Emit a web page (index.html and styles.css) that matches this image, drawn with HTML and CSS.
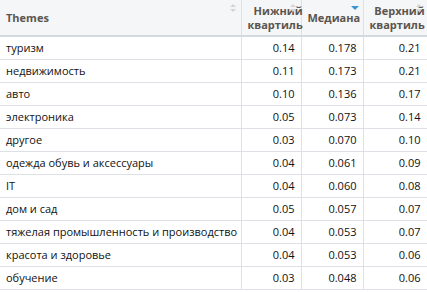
FILE: index.html
```html
<!DOCTYPE html>
<html>
<head>
<meta charset="utf-8">
<link rel="stylesheet" href="styles.css">
</head>
<body>
<table class="tbl">
  <colgroup>
    <col class="c-theme"><col class="c-num1"><col class="c-num2"><col class="c-num3">
  </colgroup>
  <thead>
    <tr>
      <th class="h-left"><span class="htext">Themes</span><span class="sort"></span></th>
      <th class="h-right"><span class="htext">Нижний квартиль</span><span class="sort"></span></th>
      <th class="h-right"><span class="htext">Медиана</span><span class="sort desc"></span></th>
      <th class="h-right"><span class="htext">Верхний квартиль</span><span class="sort"></span></th>
    </tr>
  </thead>
  <tbody>
    <tr><td>туризм</td><td class="n">0.14</td><td class="n">0.178</td><td class="n">0.21</td></tr>
    <tr><td>недвижимость</td><td class="n">0.11</td><td class="n">0.173</td><td class="n">0.21</td></tr>
    <tr><td>авто</td><td class="n">0.10</td><td class="n">0.136</td><td class="n">0.17</td></tr>
    <tr><td>электроника</td><td class="n">0.05</td><td class="n">0.073</td><td class="n">0.14</td></tr>
    <tr><td>другое</td><td class="n">0.03</td><td class="n">0.070</td><td class="n">0.10</td></tr>
    <tr><td>одежда обувь и аксессуары</td><td class="n">0.04</td><td class="n">0.061</td><td class="n">0.09</td></tr>
    <tr><td>IT</td><td class="n">0.04</td><td class="n">0.060</td><td class="n">0.08</td></tr>
    <tr><td>дом и сад</td><td class="n">0.05</td><td class="n">0.057</td><td class="n">0.07</td></tr>
    <tr><td>тяжелая промышленность и производство</td><td class="n">0.04</td><td class="n">0.053</td><td class="n">0.07</td></tr>
    <tr><td>красота и здоровье</td><td class="n">0.04</td><td class="n">0.053</td><td class="n">0.06</td></tr>
    <tr><td>обучение</td><td class="n">0.03</td><td class="n">0.048</td><td class="n">0.06</td></tr>
  </tbody>
</table>
</body>
</html>
```

FILE: styles.css
```css
html, body {
  margin: 0;
  padding: 0;
  background: #ffffff;
}
body {
  font-family: "Open Sans", "Noto Sans", sans-serif;
  font-size: 11px;
  color: #111111;
}
.tbl {
  border-collapse: collapse;
  table-layout: fixed;
  width: 427px;
}
.c-theme { width: 241px; }
.c-num1 { width: 60px; }
.c-num2 { width: 62px; }
.c-num3 { width: 64px; }

thead tr {
  height: 36px;
  background: #f5f6f7;
}
th {
  position: relative;
  font-weight: 700;
  font-size: 11px;
  color: #5a5550;
  line-height: 14px;
  padding: 2px 6px 2px 6px;
  border-bottom: 2px solid #d4d9de;
  border-right: 1px solid #dde1e5;
  vertical-align: middle;
}
th:last-child { border-right: 1px solid #e6e9ec; }
.h-left { text-align: left; }
.h-right { text-align: right; }
.htext { display: inline-block; }

.sort {
  position: absolute;
  right: 4px;
  top: 4px;
  width: 7px;
  height: 10px;
}
.sort::before, .sort::after {
  content: "";
  position: absolute;
  left: 0;
  width: 0;
  height: 0;
  border-left: 3px solid transparent;
  border-right: 3px solid transparent;
}
.sort::before {
  top: 0;
  border-bottom: 3px solid #d3d3d3;
}
.sort::after {
  top: 5px;
  border-top: 3px solid #d3d3d3;
}
.sort.desc::before { display: none; }
.sort.desc::after {
  top: 2px;
  left: -1px;
  border-left: 4px solid transparent;
  border-right: 4px solid transparent;
  border-top: 4px solid #3a95d8;
}

tbody tr { height: 23px; }
td {
  padding: 0 6px;
  line-height: 15px;
  border-bottom: 1px solid #dde1e5;
  border-right: 1px solid #dde1e5;
  white-space: nowrap;
  overflow: hidden;
}
td:last-child { border-right: 1px solid #e6e9ec; }
td.n { text-align: right; }
```
